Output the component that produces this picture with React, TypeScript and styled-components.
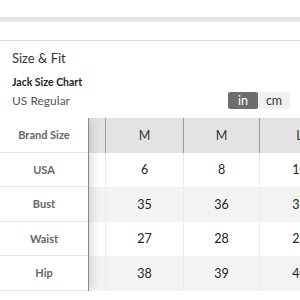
import * as React from 'react';
import { FC } from 'react';
import styled, { createGlobalStyle } from 'styled-components';

const GlobalStyle = createGlobalStyle`
    body {
        margin: 0;
        background: #FFFFFF;
        font-family: Lato, "Open Sans", "Liberation Sans", sans-serif;
    }
`;

const Page = styled.div`
    width: 300px;
    height: 300px;
    overflow: hidden;
    background: #FFFFFF;
`;

const TopGap = styled.div`
    height: 17px;
`;

const Band = styled.div`
    height: 5px;
    background: linear-gradient(#e4e4e4, #ececec);
`;

const Section = styled.div`
    margin-top: 18px;
    border-top: 1px solid #dddddd;
    padding-top: 8px;
`;

const Heading = styled.div`
    padding-left: 12px;
    font-size: 13px;
    line-height: 19px;
    color: #333333;
`;

const ChartName = styled.div`
    margin-top: 7px;
    padding-left: 12px;
    font-size: 10.5px;
    line-height: 15px;
    font-weight: 700;
    color: #222222;
`;

const SubRow = styled.div`
    display: flex;
    align-items: center;
    justify-content: space-between;
    margin-top: 2px;
    padding: 0 10px 0 12px;
    height: 17px;
`;

const SubLabel = styled.span`
    font-size: 12px;
    color: #555555;
`;

const Toggle = styled.div`
    display: flex;
    height: 17px;
`;

const ToggleOption = styled.span<{ $active?: boolean }>`
    width: ${p => (p.$active ? 30 : 32)}px;
    display: flex;
    align-items: center;
    justify-content: center;
    font-size: 12.5px;
    border-radius: 2px;
    background: ${p => (p.$active ? '#6d6d6d' : '#f1f1f1')};
    color: ${p => (p.$active ? '#FFFFFF' : '#333333')};
`;

const Table = styled.div`
    display: flex;
    margin-top: 9px;
    overflow: hidden;
`;

const LabelColumn = styled.div`
    position: relative;
    z-index: 1;
    flex: 0 0 88px;
    background: #FFFFFF;
    border-right: 1px solid #8a8a8a;
    box-shadow: 5px 0 9px -2px rgba(0, 0, 0, 0.14);
`;

const LabelCell = styled.div`
    height: 34.5px;
    box-sizing: border-box;
    display: flex;
    align-items: center;
    justify-content: center;
    font-size: 11px;
    font-weight: 700;
    color: #666666;
    border-bottom: 1px solid #e8e8e8;
`;

const DataArea = styled.div`
    flex: 1;
    overflow: hidden;
`;

const Row = styled.div<{ $head?: boolean; $striped?: boolean }>`
    display: grid;
    grid-template-columns: 16px 78px 76px 80px;
    height: 34.5px;
    background: ${p => (p.$head ? '#e3e3e3' : p.$striped ? '#f3f3f3' : '#FFFFFF')};
`;

const Cell = styled.div<{ $head?: boolean }>`
    display: flex;
    align-items: center;
    justify-content: center;
    font-size: 12.5px;
    color: ${p => (p.$head ? '#333333' : '#222222')};
    border-left: 1px solid ${p => (p.$head ? '#9a9a9a' : '#ececec')};
    &:first-child {
        border-left: none;
    }
`;

interface SizeRow {
    label: string;
    values: string[];
}

const rows: SizeRow[] = [
    { label: 'USA', values: ['6', '8', '10'] },
    { label: 'Bust', values: ['35', '36', '37'] },
    { label: 'Waist', values: ['27', '28', '29'] },
    { label: 'Hip', values: ['38', '39', '40'] },
];

const sizes = ['M', 'M', 'L'];

const App: FC = () => {
    return (
        <Page>
            <GlobalStyle />
            <TopGap />
            <Band />
            <Section>
                <Heading>Size &amp; Fit</Heading>
                <ChartName>Jack Size Chart</ChartName>
                <SubRow>
                    <SubLabel>US Regular</SubLabel>
                    <Toggle>
                        <ToggleOption $active>in</ToggleOption>
                        <ToggleOption>cm</ToggleOption>
                    </Toggle>
                </SubRow>
                <Table>
                    <LabelColumn>
                        <LabelCell>Brand Size</LabelCell>
                        {rows.map(r => <LabelCell key={r.label}>{r.label}</LabelCell>)}
                    </LabelColumn>
                    <DataArea>
                        <Row $head>
                            <Cell $head />
                            {sizes.map((s, i) => <Cell $head key={i}>{s}</Cell>)}
                        </Row>
                        {rows.map((r, i) => (
                            <Row key={r.label} $striped={i % 2 === 1}>
                                <Cell />
                                {r.values.map((v, j) => <Cell key={j}>{v}</Cell>)}
                            </Row>
                        ))}
                    </DataArea>
                </Table>
            </Section>
        </Page>
    );
};

export default App;
